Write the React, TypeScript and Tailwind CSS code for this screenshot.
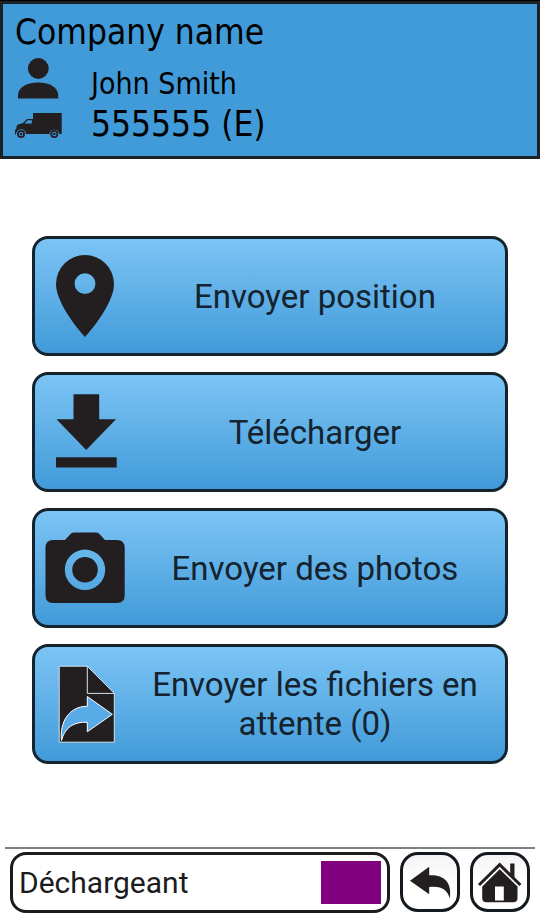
import type { ReactNode } from 'react'

function PersonIcon() {
  return (
    <svg viewBox="0 0 48 44" className="h-11 w-12 fill-[#231f20]" aria-hidden="true">
      <circle cx="23.3" cy="10.5" r="10.4" />
      <path d="M3 40.5V37C3 29 13 24.5 23.2 24.5S43.2 29 43.2 37V40.5Z" />
    </svg>
  )
}

function TruckIcon() {
  return (
    <svg viewBox="0 0 48 28" className="h-7 w-12 fill-[#231f20]" aria-hidden="true">
      <path d="M18 3H46.7V24H44.3A5 5 0 0 0 34.4 24H11A5 5 0 0 0 1 24.5L-.5 24L0 20L1.5 18.5V16L3 14.5L8 13L12 9H18Z" />
      <path d="M9.5 13.5L12.7 10.3H16.8V13.5Z" fill="#419bd9" />
      <circle cx="6" cy="24" r="4" />
      <circle cx="6" cy="24" r="2.2" fill="#419bd9" />
      <circle cx="6" cy="24" r="1.3" />
      <circle cx="39.3" cy="24" r="4" />
      <circle cx="39.3" cy="24" r="2.2" fill="#419bd9" />
      <circle cx="39.3" cy="24" r="1.3" />
    </svg>
  )
}

function PinIcon() {
  return (
    <svg viewBox="0 0 80 88" className="h-[88px] w-20 fill-[#231f20]" aria-hidden="true">
      <path
        fillRule="evenodd"
        d="M40 85C40 85 11 53.5 11 32A29 29 0 0 1 69 32C69 53.5 40 85 40 85ZM40 21.3A10.4 10.4 0 1 0 40 42.1A10.4 10.4 0 1 0 40 21.3Z"
      />
    </svg>
  )
}

function DownloadIcon() {
  return (
    <svg viewBox="0 0 80 88" className="h-[88px] w-20 fill-[#231f20]" aria-hidden="true">
      <path d="M28.5 6.3H54.2V31.3H71L41.2 62L11.5 31.3H28.5Z" />
      <path d="M11 69.3H71.7V79.5H11Z" />
    </svg>
  )
}

function CameraIcon() {
  return (
    <svg viewBox="0 0 80 88" className="h-[88px] w-20 fill-[#231f20]" aria-hidden="true">
      <path
        fillRule="evenodd"
        d="M8 16H20L26 9.5Q27.5 8.6 29 8.6H51Q52.5 8.6 54 9.5L60 16H72Q79.7 16 79.7 24V71Q79.7 79 72 79H8Q.5 79 .5 71V24Q.5 16 8 16ZM40 25.6A20.2 20.2 0 1 0 40 66A20.2 20.2 0 1 0 40 25.6Z"
      />
      <circle cx="40" cy="45.8" r="12.8" />
    </svg>
  )
}

function PendingFileIcon() {
  return (
    <svg viewBox="0 0 80 88" className="h-[88px] w-20" stroke="#d5e3ee" strokeWidth="1" aria-hidden="true">
      <path d="M14.2 6.2H42.3L69.3 33.4V82.2H14.2Z" fill="#231f20" />
      <path d="M42.3 6.2V33.4H69.3" fill="none" />
      <path
        d="M16.5 80.7C14.5 62 24 46.3 42.3 46.3V36.5L67.3 54.3L42.3 71.8V62.3C29 61.5 19.5 67.5 16.5 80.7Z"
        fill="#58abe6"
        stroke="#ffffff"
      />
    </svg>
  )
}

function BackIcon() {
  return (
    <svg viewBox="3 3 54 54" className="w-full fill-[#231f20]" aria-hidden="true">
      <path d="M10 28.7L29.2 14.7V23.3C43 22.5 52.5 29.5 49.8 46.5C47.5 37.5 41 33.5 29.2 35V42.3Z" />
    </svg>
  )
}

function HomeIcon() {
  return (
    <svg viewBox="3 3 54 54" className="w-full fill-[#231f20]" aria-hidden="true">
      <path d="M40.2 11.5H44.5V26L40.2 21.5Z" />
      <path d="M9 33L29.7 12.7L50.4 33" fill="none" stroke="#231f20" strokeWidth="3" />
      <path
        fillRule="evenodd"
        d="M29.7 17.3L47.5 34.5V46Q47.5 50.3 43.2 50.3H16.5Q12.2 50.3 12.2 46V34.5ZM25 34.5V48.4H33.8V34.5Z"
      />
    </svg>
  )
}

const actions: { label: string; icon: ReactNode }[] = [
  { label: 'Envoyer position', icon: <PinIcon /> },
  { label: 'Télécharger', icon: <DownloadIcon /> },
  { label: 'Envoyer des photos', icon: <CameraIcon /> },
  { label: 'Envoyer les fichiers en attente (0)', icon: <PendingFileIcon /> },
]

export default function App() {
  return (
    <div className="flex min-h-screen flex-col bg-white font-['Roboto',sans-serif]">
      {/* HEADER */}
      <header className="border-t border-black">
        <div className="border-3 border-[#1b2127] bg-[#419bd9] px-3 pt-1 pb-3 font-['DejaVu_Sans_Condensed','DejaVu_Sans',sans-serif] text-black">
          <h1 className="text-[35px] leading-12">Company name</h1>
          <div className="flex items-center gap-7">
            <PersonIcon />
            <p className="pt-2 text-[30px] leading-10">John Smith</p>
          </div>
          <div className="flex items-center gap-7">
            <TruckIcon />
            <p className="text-[35px] leading-10">555555 (E)</p>
          </div>
        </div>
      </header>

      {/* ACTIONS */}
      <main className="flex flex-1 flex-col justify-center gap-4 px-8 pt-2.5 pb-4">
        {actions.map((action) => (
          <button
            key={action.label}
            type="button"
            className="flex min-h-[120px] items-center rounded-2xl border-3 border-[#14232d] bg-linear-to-b from-[#7bc4f5] to-[#419bd9] px-2.5 text-[#14232d]"
          >
            {action.icon}
            <span className="flex-1 pl-2.5 text-center text-[33px] leading-[39px]">{action.label}</span>
          </button>
        ))}
      </main>

      {/* FOOTER */}
      <footer className="mx-[5px] flex gap-2.5 border-t-2 border-[#808083] px-[5px] pt-[3px] pb-2.5">
        <button
          type="button"
          className="flex h-[61px] flex-1 items-center justify-between rounded-2xl border-3 border-[#1b1b20] bg-white px-1.5 text-[30px] text-[#1b1b20]"
        >
          Déchargeant
          <span className="h-[43px] w-[60px] bg-[#800080]" />
        </button>
        <button
          type="button"
          aria-label="Retour"
          className="size-[60px] rounded-[18px] border-3 border-[#14191f] bg-linear-to-b from-[#f4f4f6] to-white to-50%"
        >
          <BackIcon />
        </button>
        <button
          type="button"
          aria-label="Accueil"
          className="size-[60px] rounded-[18px] border-3 border-[#14191f] bg-linear-to-b from-[#f4f4f6] to-white to-50%"
        >
          <HomeIcon />
        </button>
      </footer>
    </div>
  )
}
